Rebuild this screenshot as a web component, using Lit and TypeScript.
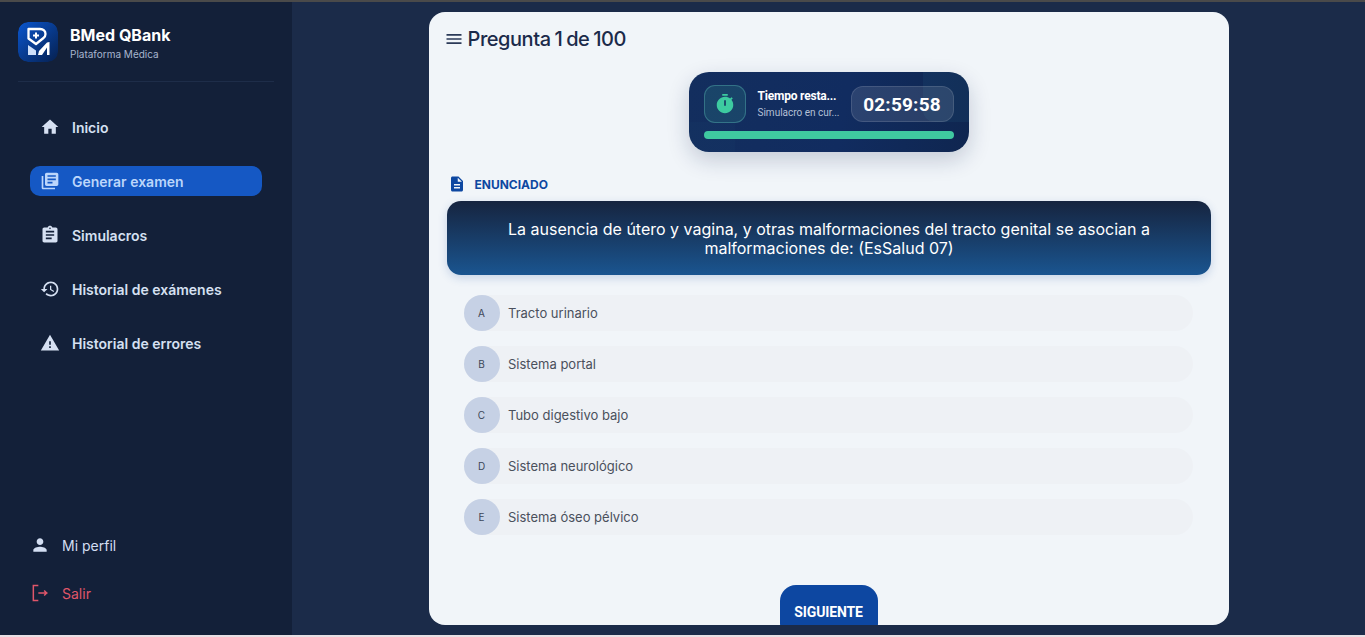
import { LitElement, html, css, svg } from "lit";
import { customElement } from "lit/decorators.js";

const I = (d: string) => html`<svg class="ic" viewBox="0 0 24 24" fill="currentColor"><path d=${d}></path></svg>`;
const nav = [
  ["Inicio", "M10 20v-6h4v6h5v-8h3L12 3 2 12h3v8z", false],
  ["Generar examen", "M4 6H2v14c0 1.1.9 2 2 2h14v-2H4V6zm16-4H8c-1.1 0-2 .9-2 2v12c0 1.1.9 2 2 2h12c1.1 0 2-.9 2-2V4c0-1.1-.9-2-2-2zm-1 9H9V9h10v2zm-4 4H9v-2h6v2zm4-8H9V5h10v2z", true],
  ["Simulacros", "M19 3h-4.18C14.4 1.84 13.3 1 12 1c-1.3 0-2.4.84-2.82 2H5c-1.1 0-2 .9-2 2v14c0 1.1.9 2 2 2h14c1.1 0 2-.9 2-2V5c0-1.1-.9-2-2-2zm-7 0c.55 0 1 .45 1 1s-.45 1-1 1-1-.45-1-1 .45-1 1-1zm2 14H7v-2h7v2zm3-4H7v-2h10v2zm0-4H7V7h10v2z", false],
  ["Historial de exámenes", "M13 3c-4.97 0-9 4.03-9 9H1l3.89 3.89.07.14L9 12H6c0-3.87 3.13-7 7-7s7 3.13 7 7-3.13 7-7 7c-1.93 0-3.68-.79-4.94-2.06l-1.42 1.42C8.27 19.99 10.51 21 13 21c4.97 0 9-4.03 9-9s-4.03-9-9-9zm-1 5v5l4.28 2.54.72-1.21-3.5-2.08V8H12z", false],
  ["Historial de errores", "M1 21h22L12 2 1 21zm12-3h-2v-2h2v2zm0-4h-2v-4h2v4z", false],
] as const;
const options = ["Tracto urinario", "Sistema portal", "Tubo digestivo bajo", "Sistema neurológico", "Sistema óseo pélvico"];

@customElement("app-root")
export class AppRoot extends LitElement {
  static styles = css`
    :host { display: block; height: 637px; overflow: hidden; font-family: Inter, "Liberation Sans", sans-serif; background: #1b2b49; }
    * { box-sizing: border-box; }
    .page { height: 637px; display: flex; flex-direction: column; }
    .top { height: 2px; background: #4a4a4a; flex: none; }
    .bottom { height: 2px; background: #e8dfe4; flex: none; }
    .shell { flex: 1; min-height: 0; display: flex; }
    .ic { display: block; width: 100%; height: 100%; }
    aside { width: 292px; flex: none; background: #132039; display: flex; flex-direction: column; padding: 20px 18px 0; }
    .brand { display: flex; align-items: center; gap: 12px; height: 40px; }
    .logo { width: 40px; height: 40px; border-radius: 10px; flex: none; display: block; }
    .btxt { padding-top: 2px; }
    .bt { font-size: 16px; font-weight: 700; line-height: 20px; color: #fff; }
    .bs { font-size: 10px; line-height: 14px; color: #a8b6cf; margin-top: 2px; }
    .rule { height: 1px; background: #1e2d49; margin: 19px 0 0 0; }
    nav { display: flex; flex-direction: column; gap: 24px; padding: 30px 12px 0; margin-top: 0; }
    .item { height: 30px; display: flex; align-items: center; gap: 12px; padding-left: 10px; border-radius: 10px; color: #d6e0f2; font-size: 14px; font-weight: 600; }
    .item.on { background: #1558c4; color: #bcd6fb; }
    .item span.i { width: 20px; height: 20px; flex: none; }
    .foot { margin-top: auto; display: flex; flex-direction: column; gap: 28px; padding: 0 0 32px 12px; }
    .fitem { height: 20px; display: flex; align-items: center; gap: 12px; font-size: 14px; color: #d3def2; }
    .fitem.out { color: #e0566a; }
    .fitem span.i { width: 20px; height: 20px; flex: none; }
    main { flex: 1; display: flex; justify-content: center; padding: 10px 0; min-width: 0; }
    .card { width: 800px; height: 613px; background: #f1f5f9; border-radius: 16px; overflow: hidden; display: flex; flex-direction: column; padding: 16px 18px 0; }
    .card > * { flex: none; }
    header { display: flex; align-items: center; gap: 4px; height: 22px; color: #1b2a4a; font-size: 20px; font-weight: 500; letter-spacing: -0.45px; word-spacing: -1px; margin-left: -3px; }
    header span.i { width: 20px; height: 20px; color: #2b3a58; flex: none; }
    .timer { position: relative; overflow: hidden; align-self: center; width: 280px; height: 80px; margin-top: 22px; border-radius: 20px; padding: 13px 15px 0; background: linear-gradient(100deg, #132e5e 0%, #112c60 55%, #0f2650 100%); box-shadow: 0 8px 22px rgba(15, 36, 80, 0.2); }
    .glow { position: absolute; width: 46px; height: 50px; right: 0; top: 0; background: rgba(40, 100, 130, 0.16); border-radius: 0 20px 0 12px; }
    .glow2 { position: absolute; width: 46px; height: 30px; left: 0; bottom: 0; background: rgba(40, 100, 130, 0.07); }
    .trow { position: relative; display: flex; align-items: center; height: 38px; }
    .tic { width: 42px; height: 38px; flex: none; border-radius: 11px; background: rgba(64, 200, 170, 0.15); border: 1px solid rgba(100, 200, 190, 0.35); display: flex; align-items: center; justify-content: center; color: #3dcba0; }
    .tic span { width: 22px; height: 22px; }
    .tt { width: 81px; margin-left: 12px; flex: none; font-family: Roboto, sans-serif; color: #fff; white-space: nowrap; }
    .tt b { display: block; font-size: 12px; line-height: 15px; font-weight: 700; letter-spacing: -0.2px; }
    .tt small { display: block; font-size: 10px; line-height: 13px; margin-top: 2px; color: #b5c0d6; }
    .chip { margin-left: 12px; width: 103px; height: 36px; border-radius: 12px; background: rgba(255, 255, 255, 0.11); border: 1px solid rgba(255, 255, 255, 0.12); color: #fff; font-family: Roboto, sans-serif; font-size: 19px; font-weight: 700; letter-spacing: 0.2px; display: flex; align-items: center; justify-content: center; }
    .bar { position: relative; height: 8px; margin-top: 8px; border-radius: 4px; background: #3fc9a0; }
    .label { display: flex; align-items: center; gap: 9px; height: 18px; margin-top: 23px; padding-left: 1px; color: #0d47a1; font-size: 12px; font-weight: 700; }
    .label span.i { width: 18px; height: 18px; flex: none; }
    .stmt { margin: 8px 0 0 0; width: 764px; height: 74px; border-radius: 14px; background: linear-gradient(180deg, #16243f 0%, #1a5590 100%); box-shadow: 0 3px 10px rgba(30, 80, 160, 0.2); color: #fff; font-size: 16px; line-height: 19px; font-weight: 400; text-align: center; display: flex; align-items: center; justify-content: center; padding: 2px 40px 0 41px; }
    .opts { display: flex; flex-direction: column; gap: 15px; margin: 20px 0 0 17px; width: 729px; }
    .opt { position: relative; height: 36px; display: flex; align-items: center; gap: 8.5px; background: #eef1f5; border-radius: 18px; color: #4a505c; font-size: 13px; }
    .ltr { width: 36px; height: 36px; flex: none; border-radius: 50%; background: #c6d1e5; color: #3c4658; font-size: 10px; display: flex; align-items: center; justify-content: center; }
    .next { align-self: center; margin-top: 50px; width: 98px; height: 54px; border: 0; border-radius: 16px; background: #0d47a1; color: #fff; font-family: Roboto, sans-serif; font-size: 14px; font-weight: 700; letter-spacing: -0.15px; padding: 0; }
  `;

  render() {
    return html`<div class="page">
      <div class="top"></div>
      <div class="shell">
        <aside>
          <div class="brand">
            <svg class="logo" viewBox="0 0 40 40">
              <defs><linearGradient id="lg" x1="0" y1="0" x2="1" y2="1"><stop offset="0" stop-color="#0a56cf"></stop><stop offset="1" stop-color="#06204f"></stop></linearGradient></defs>
              <rect width="40" height="40" rx="10" fill="url(#lg)"></rect>
              <path d="M10.5 7H22c3.500 0 5.500 2.200 5.500 5 0 1.800-.8 3.200-2 4L18 22l-7.500-5.500z" fill="none" stroke="#fff" stroke-width="2.300" stroke-linejoin="round"></path>
              <path d="M18 10.500v6M15 13.500h6" stroke="#fff" stroke-width="2"></path>
              <path d="M10 23l8 5.500V33h-8z" fill="#cfe0fa"></path>
              <path d="M20 33l1-4 8-8.500 2.500-.5v13H29v-7.500L24 33z" fill="#fff"></path>
            </svg>
            <div class="btxt"><div class="bt">BMed QBank</div><div class="bs">Plataforma Médica</div></div>
          </div>
          <div class="rule"></div>
          <nav>
            ${nav.map(([t, d, on]) => html`<div class="item ${on ? "on" : ""}"><span class="i">${I(d)}</span>${t}</div>`)}
          </nav>
          <div class="foot">
            <div class="fitem"><span class="i">${I("M12 12c2.21 0 4-1.79 4-4s-1.79-4-4-4-4 1.79-4 4 1.79 4 4 4zm0 2c-2.67 0-8 1.34-8 4v2h16v-2c0-2.66-5.33-4-8-4z")}</span>Mi perfil</div>
            <div class="fitem out"><span class="i"><svg class="ic" viewBox="0 0 24 24" fill="none" stroke="currentColor" stroke-width="1.8">${svg`<path d="M10 3H4v18h6M10 12h11M17 9l3 3-3 3"></path>`}</svg></span>Salir</div>
          </div>
        </aside>
        <main>
          <section class="card">
            <header><span class="i">${I("M3 18h18v-2H3v2zm0-5h18v-2H3v2zm0-7v2h18V6H3z")}</span>Pregunta 1 de 100</header>
            <div class="timer">
              <div class="glow"></div><div class="glow2"></div>
              <div class="trow">
                <div class="tic"><span>${I("M15 1H9v2h6V1zm4.03 6.39l1.42-1.42c-.43-.51-.9-.99-1.41-1.41l-1.42 1.42C16.07 4.74 14.12 4 12 4c-4.97 0-9 4.03-9 9s4.02 9 9 9 9-4.03 9-9c0-2.12-.74-4.07-1.97-5.61zM13 14h-2V8h2v6z")}</span></div>
                <div class="tt"><b>Tiempo resta...</b><small>Simulacro en cur...</small></div>
                <div class="chip">02:59:58</div>
              </div>
              <div class="bar"></div>
            </div>
            <div class="label"><span class="i">${I("M14 2H6c-1.1 0-2 .9-2 2v16c0 1.1.9 2 2 2h12c1.1 0 2-.9 2-2V8l-6-6zm2 16H8v-2h8v2zm0-4H8v-2h8v2zm-3-5V3.5L18.5 9H13z")}</span>ENUNCIADO</div>
            <div class="stmt">La ausencia de útero y vagina, y otras malformaciones del tracto genital se asocian a malformaciones de: (EsSalud 07)</div>
            <div class="opts">
              ${options.map((o, i) => html`<div class="opt"><span class="ltr">${"ABCDE"[i]}</span>${o}</div>`)}
            </div>
            <button class="next">SIGUIENTE</button>
          </section>
        </main>
      </div>
      <div class="bottom"></div>
    </div>`;
  }
}
